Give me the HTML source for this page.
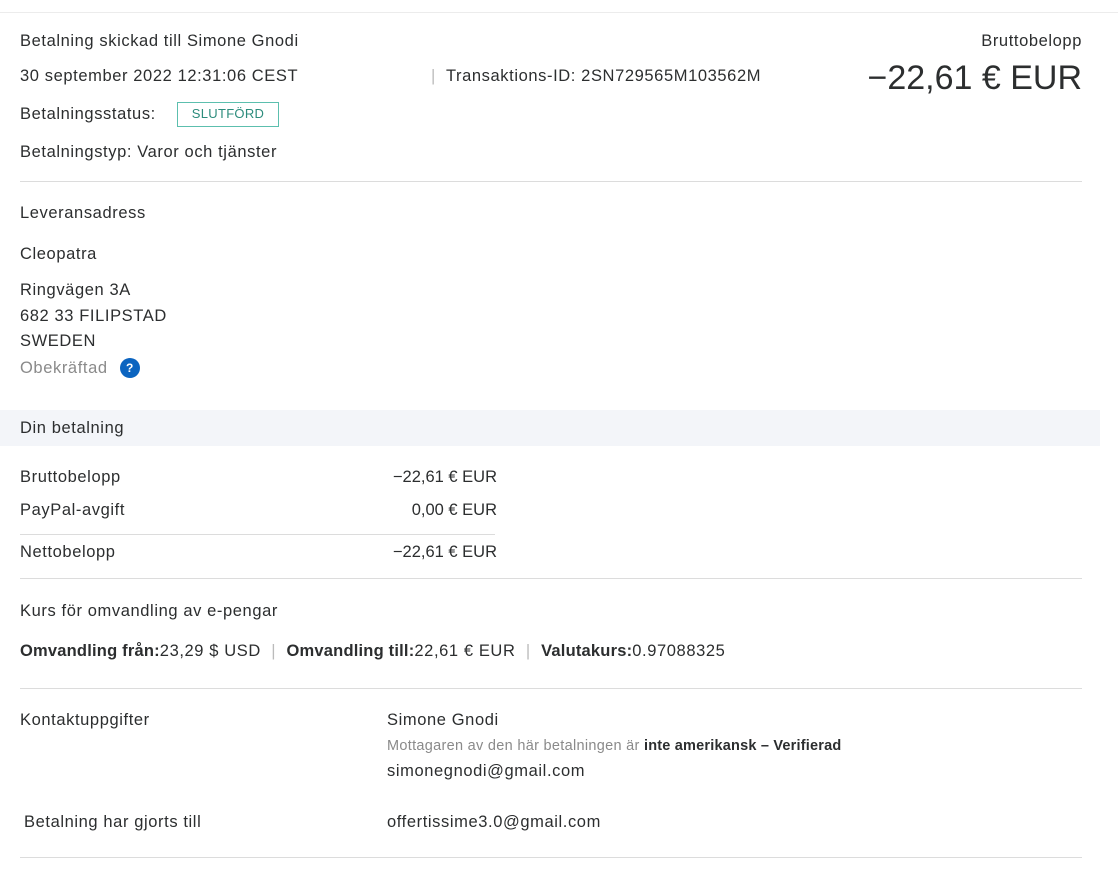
<!DOCTYPE html>
<html><head><meta charset="utf-8"><style>
body{margin:0;width:1118px;height:870px;background:#fff;font-family:"Liberation Sans",sans-serif;color:#2c2e2f;font-size:16.5px;letter-spacing:0.6px;position:relative;overflow:hidden}
.a{position:absolute;white-space:nowrap;line-height:20px}
.hr{position:absolute;height:1px;background:#dcdcdc}
.g{color:#8a8a8a}
b{font-weight:bold;letter-spacing:0.2px}
</style></head><body>
<div class="hr" style="top:12px;left:0;width:1118px;background:#ececec"></div>
<div class="a" style="left:20px;top:31px">Betalning skickad till Simone Gnodi</div>
<div class="a" style="left:20px;top:66px">30 september 2022 12:31:06 CEST</div>
<div class="a" style="left:431px;top:66px"><span style="color:#bbb">|</span>&nbsp; Transaktions-ID: 2SN729565M103562M</div>
<div class="a" style="left:20px;top:104px">Betalningsstatus:</div>
<div class="a" style="left:177px;top:102px;width:102px;border:1px solid #5cbfae;color:#2c8c7c;font-size:13px;line-height:22px;text-align:center;box-sizing:border-box;height:25px;letter-spacing:0.3px">SLUTFÖRD</div>
<div class="a" style="left:20px;top:142px">Betalningstyp: Varor och tjänster</div>
<div class="a" style="right:36px;top:31px">Bruttobelopp</div>
<div class="a" style="right:36px;top:58px;font-size:34px;line-height:40px;letter-spacing:0">−22,61 € EUR</div>
<div class="hr" style="top:181px;left:20px;width:1062px"></div>
<div class="a" style="left:20px;top:203px">Leveransadress</div>
<div class="a" style="left:20px;top:244px">Cleopatra</div>
<div class="a" style="left:20px;top:280px">Ringvägen 3A</div>
<div class="a" style="left:20px;top:306px">682 33 FILIPSTAD</div>
<div class="a" style="left:20px;top:331px">SWEDEN</div>
<div class="a g" style="left:20px;top:358px">Obekräftad</div>
<div style="position:absolute;left:120px;top:358px;width:20px;height:20px;border-radius:50%;background:#0b64c0;color:#fff;font-size:12px;line-height:20px;text-align:center;font-weight:bold">?</div>
<div style="position:absolute;left:0;top:410px;width:1100px;height:36px;background:#f3f5f9"></div>
<div class="a" style="left:20px;top:418px">Din betalning</div>
<div class="a" style="left:20px;top:467px">Bruttobelopp</div>
<div class="a" style="right:621px;top:467px;letter-spacing:0">−22,61 € EUR</div>
<div class="a" style="left:20px;top:500px">PayPal-avgift</div>
<div class="a" style="right:621px;top:500px;letter-spacing:0">0,00 € EUR</div>
<div class="hr" style="top:534px;left:20px;width:475px"></div>
<div class="a" style="left:20px;top:542px">Nettobelopp</div>
<div class="a" style="right:621px;top:542px;letter-spacing:0">−22,61 € EUR</div>
<div class="hr" style="top:578px;left:20px;width:1062px"></div>
<div class="a" style="left:20px;top:601px">Kurs för omvandling av e-pengar</div>
<div class="a" style="left:20px;top:641px"><b>Omvandling från:</b>23,29 $ USD <span style="color:#bbb">&nbsp;|&nbsp;</span> <b>Omvandling till:</b>22,61 € EUR <span style="color:#bbb">&nbsp;|&nbsp;</span> <b>Valutakurs:</b>0.97088325</div>
<div class="hr" style="top:688px;left:20px;width:1062px"></div>
<div class="a" style="left:20px;top:710px">Kontaktuppgifter</div>
<div class="a" style="left:387px;top:710px">Simone Gnodi</div>
<div class="a" style="left:387px;top:736px;font-size:14.5px;letter-spacing:0.3px"><span class="g">Mottagaren av den här betalningen är</span> <b>inte amerikansk – Verifierad</b></div>
<div class="a" style="left:387px;top:761px">simonegnodi@gmail.com</div>
<div class="a" style="left:24px;top:812px">Betalning har gjorts till</div>
<div class="a" style="left:387px;top:812px">offertissime3.0@gmail.com</div>
<div class="hr" style="top:857px;left:20px;width:1062px"></div>
</body></html>
